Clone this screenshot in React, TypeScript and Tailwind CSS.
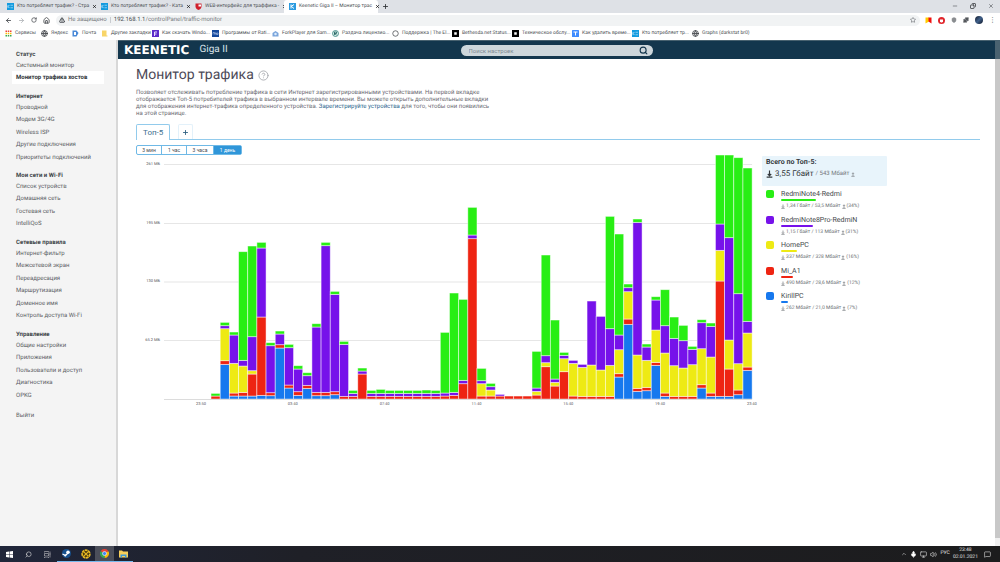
import React from "react";
import {
  ArrowLeft,
  ArrowRight,
  ChevronUp,
  CircleHelp,
  Copy,
  Globe,
  House,
  MessageSquare,
  Mic,
  Minus,
  Monitor,
  Plus,
  Puzzle,
  RotateCw,
  Search,
  Shield,
  Star,
  TriangleAlert,
  Volume2,
  X,
} from "lucide-react";

const tabs = [
  { title: "Кто потребляет трафик? - Стра", icon: "keenetic", active: false },
  { title: "Кто потребляет трафик? - Ката", icon: "keenetic", active: false },
  { title: "WEB-интерфейс для траффика -", icon: "shield", active: false },
  { title: "Keenetic Giga II – Монитор трас", icon: "router", active: true },
];

const bookmarks = [
  { title: "Сервисы", icon: "apps", width: "w-[30px]" },
  { title: "Яндекс", icon: "globe", width: "w-[25px]" },
  { title: "Почта", icon: "mail", width: "w-[23px]" },
  { title: "Другие закладки", icon: "folder", width: "w-[45px]" },
  { title: "Как скачать Windo...", icon: "purple", width: "w-[54px]" },
  { title: "Программы от Rati...", icon: "navy", width: "w-[54px]" },
  { title: "ForkPlayer для Sam...", icon: "fork", width: "w-[54px]" },
  { title: "Раздача лицензио...", icon: "teal", width: "w-[54px]" },
  { title: "Поддержка | The El...", icon: "ring", width: "w-[54px]" },
  { title: "Bethesda.net Status...", icon: "black", width: "w-[54px]" },
  { title: "Техническое обслу...", icon: "black", width: "w-[54px]" },
  { title: "Как удалить време...", icon: "letter", width: "w-[54px]" },
  { title: "Кто потребляет тр...", icon: "keenetic", width: "w-[54px]" },
  { title: "Graphs (darkstat br0)", icon: "globe", width: "w-[60px]" },
];

const menu = [
  { title: "Статус", items: ["Системный монитор", "Монитор трафика хостов"] },
  {
    title: "Интернет",
    items: ["Проводной", "Модем 3G/4G", "Wireless ISP", "Другие подключения", "Приоритеты подключений"],
  },
  { title: "Мои сети и Wi-Fi", items: ["Список устройств", "Домашняя сеть", "Гостевая сеть", "IntelliQoS"] },
  {
    title: "Сетевые правила",
    items: [
      "Интернет-фильтр",
      "Межсетевой экран",
      "Переадресация",
      "Маршрутизация",
      "Доменное имя",
      "Контроль доступа Wi-Fi",
    ],
  },
  { title: "Управление", items: ["Общие настройки", "Приложения", "Пользователи и доступ", "Диагностика", "OPKG"] },
];

const hosts = [
  { name: "RedmiNote4-Redmi", down: "1,34 Гбайт", up: "53,5 Мбайт", share: "(34%)", color: "bg-[#28ee14]", bar: "w-[35px]" },
  { name: "RedmiNote8Pro-RedmiN", down: "1,15 Гбайт", up: "113 Мбайт", share: "(31%)", color: "bg-[#7612ea]", bar: "w-8" },
  { name: "HomePC", down: "337 Мбайт", up: "328 Мбайт", share: "(16%)", color: "bg-[#eeea14]", bar: "w-4" },
  { name: "Mi_A1", down: "490 Мбайт", up: "28,6 Мбайт", share: "(12%)", color: "bg-[#ee2412]", bar: "w-3" },
  { name: "KirillPC", down: "262 Мбайт", up: "21,0 Мбайт", share: "(7%)", color: "bg-[#1678ee]", bar: "w-[7px]" },
];

// stacking order from the axis up
const stackColors = ["#1678ee", "#ee2412", "#eeea14", "#7612ea", "#28ee14"];

const bars = [
  [0, 9, 0, 0, 8],
  [104, 11, 96, 9, 10],
  [9, 9, 89, 85, 9],
  [9, 11, 79, 17, 326],
  [9, 66, 10, 102, 272],
  [11, 235, 0, 207, 17],
  [10, 9, 0, 141, 9],
  [153, 10, 0, 32, 9],
  [33, 9, 0, 112, 10],
  [11, 11, 0, 68, 10],
  [32, 9, 0, 29, 9],
  [10, 10, 0, 196, 10],
  [10, 10, 0, 440, 10],
  [13, 9, 0, 292, 9],
  [0, 8, 0, 156, 9],
  [0, 8, 0, 9, 9],
  [0, 75, 0, 9, 9],
  [0, 8, 0, 9, 9],
  [0, 8, 0, 9, 12],
  [0, 8, 0, 9, 9],
  [0, 8, 0, 9, 9],
  [0, 8, 0, 9, 9],
  [0, 8, 0, 9, 9],
  [0, 8, 0, 9, 10],
  [0, 8, 0, 9, 9],
  [0, 9, 0, 9, 182],
  [0, 11, 0, 9, 298],
  [0, 46, 0, 10, 243],
  [0, 481, 0, 11, 83],
  [0, 9, 37, 9, 37],
  [0, 9, 18, 10, 10],
  [0, 9, 0, 5, 0],
  [0, 9, 0, 0, 0],
  [0, 9, 0, 0, 0],
  [0, 9, 0, 0, 0],
  [0, 12, 11, 10, 110],
  [0, 97, 12, 21, 302],
  [0, 39, 11, 10, 177],
  [0, 82, 39, 10, 9],
  [0, 9, 98, 9, 0],
  [0, 8, 87, 9, 0],
  [0, 8, 94, 192, 0],
  [0, 8, 79, 161, 0],
  [0, 8, 93, 110, 337],
  [66, 10, 72, 44, 303],
  [224, 16, 82, 12, 11],
  [23, 9, 100, 398, 10],
  [25, 10, 81, 40, 9],
  [101, 9, 97, 90, 10],
  [8, 10, 120, 82, 108],
  [0, 8, 92, 82, 64],
  [0, 8, 85, 82, 46],
  [0, 8, 95, 46, 9],
  [33, 10, 108, 78, 9],
  [8, 10, 108, 92, 10],
  [8, 346, 92, 79, 207],
  [8, 82, 87, 307, 248],
  [13, 14, 79, 210, 408],
  [86, 10, 102, 35, 460],
];

const yTicks = [
  { label: "261 МБ", y: 9.5 },
  { label: "195 МБ", y: 68.5 },
  { label: "130 МБ", y: 127 },
  { label: "65.2 МБ", y: 185.5 },
];

const xTicks = ["23:50", "03:40", "07:40", "11:40", "15:40", "19:40", "23:40"];

function SmallIcon({ name }: { name: string }) {
  if (name === "globe") return <Globe className="w-[7px] h-[7px] shrink-0 text-[#44474b]" strokeWidth={3} />;
  return (
    <svg viewBox="0 0 14 14" className="w-[7px] h-[7px] shrink-0">
      {name === "apps" &&
        [0, 1, 2].map((r) =>
          [0, 1, 2].map((c) => (
            <rect
              key={`${r}${c}`}
              x={1 + c * 4.5}
              y={1 + r * 4.5}
              width="3"
              height="3"
              fill={["#ea4335", "#fbbc04", "#34a853"][r]}
            />
          ))
        )}
      {name === "keenetic" && (
        <>
          <rect width="14" height="14" fill="#149bdf" />
          <path d="M2 4v6M2 7l3-3M2 7l3 3M7 4.500h5M7 9.500h5" stroke="#bfe6fa" strokeWidth="1.300" fill="none" />
        </>
      )}
      {name === "shield" && (
        <>
          <path d="M1 1h12v6c0 4-3 6-6 7-3-1-6-3-6-7z" fill="#d0202c" />
          <path d="M7 3h5v4H7z" fill="#fff" />
        </>
      )}
      {name === "router" && (
        <>
          <rect width="14" height="14" fill="#2b9be0" />
          <path d="M4 3v8M4 7l6-4M5 7l5 4" stroke="#fff" strokeWidth="2" fill="none" />
        </>
      )}
      {name === "mail" && (
        <>
          <path d="M1 1h8l4 5-4 7H1z" fill="#4a8ad8" />
          <path d="M4 4h4v6H4z" fill="#fff" />
        </>
      )}
      {name === "folder" && <path d="M2 1h9v10h2v2H2z" fill="#f8d568" />}
      {name === "purple" && (
        <>
          <rect width="14" height="14" fill="#5b2bc9" />
          <path d="M5 12V4h5M5 8h4" stroke="#e8dcff" strokeWidth="2" fill="none" />
        </>
      )}
      {name === "navy" && (
        <>
          <rect width="14" height="14" fill="#14489c" />
          <path d="M2 9V5h3v4M7 9V5M9 9h3V6H9z" stroke="#d8e6ff" fill="none" />
        </>
      )}
      {name === "fork" && (
        <>
          <path d="M1 6l6-4 6 4v7H1z" fill="#7aa5dc" />
          <circle cx="7" cy="8" r="2.500" fill="#dcebfb" />
        </>
      )}
      {name === "teal" && (
        <>
          <circle cx="7" cy="7" r="6" fill="#d5ece8" stroke="#2e7d78" strokeWidth="1.500" />
          <path d="M5 10V4h4v3H5l4 3" stroke="#185a58" strokeWidth="1.500" fill="none" />
        </>
      )}
      {name === "ring" && <circle cx="7" cy="7" r="5.500" fill="none" stroke="#44474b" strokeWidth="1.500" />}
      {name === "black" && (
        <>
          <rect width="14" height="14" fill="#000" />
          <path d="M4.500 4.500h5v5h-5z" fill="#fff" />
        </>
      )}
      {name === "letter" && (
        <>
          <rect width="14" height="14" rx="1" fill="#3f8cff" />
          <path d="M3 4h8M7 4v7" stroke="#fff" strokeWidth="2" />
        </>
      )}
    </svg>
  );
}

function TransferIcon({ up = false, className }: { up?: boolean; className: string }) {
  return (
    <svg viewBox="0 0 12 14" className={`shrink-0 fill-none stroke-current ${className}`} strokeWidth="2">
      <path d={up ? "M6 12V2M3 5l3-3 3 3M1 12.500h10" : "M6 1v9M3 7l3 3 3-3M1 12.500h10"} />
    </svg>
  );
}

function BrowserChrome() {
  return (
    <header className="text-[#4b4f54]">
      {/* Tab strip */}
      <div className="h-[13px] flex items-stretch bg-[#dee1e6]">
        <div className="flex items-stretch pl-[2px]">
          {tabs.map((tab, i) => (
            <div
              key={i}
              className={`w-[94px] pl-[5px] pr-1 flex items-center gap-[3px] text-[5px] ${
                tab.active ? "bg-white rounded-t-[3px]" : ""
              }`}
            >
              <SmallIcon name={tab.icon} />
              <span className="flex-1 whitespace-nowrap">{tab.title}</span>
              <button aria-label="Закрыть вкладку">
                <X className="w-[5px] h-[5px] text-black" strokeWidth={3} />
              </button>
            </div>
          ))}
        </div>
        <button aria-label="Новая вкладка" className="px-1">
          <Plus className="w-[7px] h-[7px] text-[#33363a]" strokeWidth={3} />
        </button>
        <div className="ml-auto pr-[6px] pb-[2px] flex items-center gap-3 text-[#33363a]">
          <button aria-label="Свернуть">
            <Minus className="w-[6px] h-[6px]" />
          </button>
          <button aria-label="Восстановить">
            <Copy className="w-[6px] h-[6px] -scale-x-100" strokeWidth={3} />
          </button>
          <button aria-label="Закрыть">
            <X className="w-[6px] h-[6px]" />
          </button>
        </div>
      </div>

      {/* Address bar */}
      <div className="h-[14px] px-[5px] flex items-center bg-white">
        <div className="flex items-center gap-[6px] pr-[6px]">
          <button aria-label="Назад">
            <ArrowLeft className="w-[7px] h-[7px]" strokeWidth={3} />
          </button>
          <button aria-label="Вперёд">
            <ArrowRight className="w-[7px] h-[7px] text-[#b4b7ba]" strokeWidth={3} />
          </button>
          <button aria-label="Обновить">
            <RotateCw className="w-[6px] h-[6px]" strokeWidth={3} />
          </button>
          <button aria-label="Домой">
            <House className="w-[7px] h-[7px]" strokeWidth={3} />
          </button>
        </div>
        <div className="flex-1 h-[11px] rounded-full bg-[#f1f3f4] pl-[3px] pr-1 flex items-center text-[6px] leading-none">
          <TriangleAlert className="w-[6px] h-[6px]" strokeWidth={4} />
          <span className="ml-[3px] pr-[3px] border-r border-[#c9ccd0] text-[#777b80]">Не защищено</span>
          <span className="ml-[3px]">
            192.168.1.1<span className="text-[#777b80]">/controlPanel/traffic-monitor</span>
          </span>
          <button aria-label="Добавить в закладки" className="ml-auto">
            <Star className="w-[6px] h-[6px]" />
          </button>
        </div>
        <div className="flex items-center gap-[6px] pl-[5px]">
          <svg viewBox="0 0 14 14" className="w-[7px] h-[7px]">
            <path d="M1 1h7v8l-7 4z" fill="#ffcc00" />
            <path d="M7 1h6v12L7 9z" fill="#f00f0f" />
          </svg>
          <svg viewBox="0 0 14 14" className="w-[7px] h-[7px]">
            <circle cx="7" cy="7" r="7" fill="#e0252b" />
            <path d="M4 5h6v4l-2 2H6L4 9z" fill="#fff" />
          </svg>
          <Shield className="w-[6px] h-[6px] fill-[#8a8d90] text-[#8a8d90]" />
          <Puzzle className="w-[6px] h-[6px] fill-[#55585c]" />
          <span className="w-2 h-2 rounded-full bg-[linear-gradient(135deg,#101828,#40608a,#0d1424)]" />
          <span className="w-[6px] text-[7px] leading-none text-center">⋮</span>
        </div>
      </div>

      {/* Bookmarks */}
      <nav className="h-[13px] px-[5px] flex items-center gap-[6px] bg-white text-[5px]">
        {bookmarks.map((b) => (
          <a key={b.title} href="#" className={`flex items-center gap-[3px] whitespace-nowrap shrink-0 ${b.width}`}>
            <SmallIcon name={b.icon} />
            <span>{b.title}</span>
          </a>
        ))}
      </nav>
    </header>
  );
}

function Sidebar() {
  return (
    <aside className="w-[118px] shrink-0 pt-[10px] pl-3 pr-3 bg-[#f4f4f4] border-r-2 border-[#d8d8d8] text-[6px] text-[#5b6064]">
      <nav className="space-y-2">
        {menu.map((group) => (
          <section key={group.title}>
            <h2 className="px-1 h-[9px] leading-[9px] font-bold text-[#41464a]">{group.title}</h2>
            <ul>
              {group.items.map((item) => (
                <li
                  key={item}
                  className={`flex items-center h-3 even:h-[13px] px-1 ${
                    item === "Монитор трафика хостов" ? "bg-white font-bold text-[#2f3438]" : ""
                  }`}
                >
                  <a href="#">{item}</a>
                </li>
              ))}
            </ul>
          </section>
        ))}
        <a href="#" className="flex items-center h-3 px-1">
          Выйти
        </a>
      </nav>
    </aside>
  );
}

function TrafficChart() {
  const step = 9.17;
  const base = 244;

  return (
    <svg viewBox="0 0 616 252" className="w-full h-auto overflow-visible" role="img" aria-label="Трафик по хостам">
      {yTicks.map((t) => (
        <g key={t.label}>
          <line x1="28" x2="616" y1={t.y} y2={t.y} stroke="#e6e6e6" />
          <text x="24" y={t.y} textAnchor="end" className="text-[4px] fill-[#55555a]">
            {t.label}
          </text>
        </g>
      ))}
      {bars.map((stack, i) => {
        let top = base;
        return stack.map((value, k) => {
          const h = value / 3;
          top -= h;
          if (!value) return null;
          return (
            <rect
              key={`${i}-${k}`}
              x={75 + i * step}
              y={top}
              width={step}
              height={h}
              fill={stackColors[k]}
              stroke="#fff"
              strokeOpacity="0.6"
              strokeWidth="0.8"
            />
          );
        });
      })}
      <line x1="28" x2="616" y1={base + 0.5} y2={base + 0.5} stroke="#dcdcdc" />
      {xTicks.map((label, i) => (
        <text key={label} x={65 + i * 91.8} y="250" textAnchor="middle" className="text-[4px] fill-[#55555a]">
          {label}
        </text>
      ))}
    </svg>
  );
}

function Legend() {
  return (
    <div className="w-[125px] shrink-0 mt-px">
      <div className="h-[30px] px-1 pt-[2px] rounded-[1px] bg-[#e8f4fb] text-[#33383c]">
        <h2 className="text-[7px] leading-[9px] font-bold">Всего по Топ-5:</h2>
        <p className="mt-[2px] flex items-center gap-[2px] text-[8px] leading-[10px]">
          <TransferIcon className="w-[7px] h-[8px]" />
          3,55 Гбайт
          <span className="text-[6px] text-[#75797d]">/ 543 Мбайт</span>
          <TransferIcon up className="w-[4px] h-[5px] text-[#75797d]" />
        </p>
      </div>
      <ul className="mt-1">
        {hosts.map((host) => (
          <li key={host.name} className="h-[26px] even:h-[25px] pl-1 flex items-start gap-[7px]">
            <span className={`w-2 h-2 rounded-[2px] ${host.color}`} />
            <div className="text-[#44484c]">
              <p className="text-[7px] leading-[8px]">{host.name}</p>
              <div className={`mt-px h-[2px] rounded-full ${host.color} ${host.bar}`} />
              <p className="mt-[3px] flex items-center gap-px text-[5px] leading-[5px] text-[#6d7175] whitespace-nowrap">
                <TransferIcon className="w-[4px] h-[5px]" />
                {host.down} / {host.up}
                <TransferIcon up className="w-[4px] h-[5px]" />
                {host.share}
              </p>
            </div>
          </li>
        ))}
      </ul>
    </div>
  );
}

function RouterHeader() {
  return (
    <div className="h-[19px] px-[6px] flex items-center bg-[#13364d] border-t border-[#48616f] text-white">
      <div className="flex-1 flex items-center gap-[10px]">
        <span className="font-['DejaVu_Sans',sans-serif] text-[12px] leading-none font-bold">KEENETIC</span>
        <span className="text-[10px] leading-none text-[#dbe4ea]">Giga II</span>
      </div>
      <label className="w-[192px] h-[11px] px-2 rounded-full bg-[#cdd6db] flex items-center">
        <input
          type="text"
          aria-label="Поиск настроек"
          placeholder="Поиск настроек"
          className="flex-1 min-w-0 text-[6px] leading-none outline-none bg-transparent placeholder:text-[#7f8b94]"
        />
        <Search className="w-[9px] h-[9px] text-[#13364d] -mr-[3px]" strokeWidth={3} />
      </label>
      <div className="flex-1" />
    </div>
  );
}

function Taskbar() {
  return (
    <footer className="h-4 flex items-stretch text-[#e4e4e4] bg-[linear-gradient(90deg,#20263a,#1f2027_30%,#1c1c1d)]">
      <button aria-label="Пуск" className="w-[19px] flex items-center justify-center">
        <svg viewBox="0 0 14 14" className="w-[7px] h-[7px] fill-white">
          <path d="M0 2l6-1v5.500H0zM7 1l7-1v6.500H7zM0 7.500h6V13l-6-1zM7 7.500h7V14l-7-1z" />
        </svg>
      </button>
      <button aria-label="Поиск" className="w-[19px] flex items-center justify-center">
        <Search className="w-[7px] h-[7px] -scale-x-100" />
      </button>
      <button aria-label="Представление задач" className="w-[19px] flex items-center justify-center">
        <svg viewBox="0 0 14 14" className="w-[7px] h-[7px] fill-none stroke-current">
          <path d="M1 5h8v5H1zM1 3V1h8v2M1 12v2h8v-2M12 1v12M11 6h2" />
        </svg>
      </button>
      <button aria-label="Steam" className="w-[19px] flex items-center justify-center border-b border-[#76b9ed]">
        <svg viewBox="0 0 18 18" className="w-[9px] h-[9px]">
          <circle cx="9" cy="9" r="9" fill="#17508c" />
          <path d="M1 10l6 3 5-5" stroke="#fff" strokeWidth="2.500" fill="none" />
          <circle cx="12" cy="6.500" r="3.500" fill="#fff" />
          <circle cx="6.500" cy="13" r="2" fill="#fff" />
        </svg>
      </button>
      <button aria-label="Игра" className="w-[19px] flex items-center justify-center border-b border-[#76b9ed]">
        <svg viewBox="0 0 18 18" className="w-[10px] h-[10px]">
          <circle cx="9" cy="9" r="7" fill="#4a3a0d" stroke="#e8b923" strokeWidth="3" strokeDasharray="5 1" />
          <path d="M5 5l8 8M13 5l-8 8" stroke="#e8b923" strokeWidth="2" />
        </svg>
      </button>
      <button
        aria-label="Chrome"
        className="w-[19px] flex items-center justify-center bg-[#4b4e5a] border-b border-[#76b9ed]"
      >
        <svg viewBox="0 0 18 18" className="w-[9px] h-[9px]">
          <path d="M9 9L1.200 4.500A9 9 0 0 1 16.800 4.500z" fill="#ea4335" />
          <path d="M9 9l7.800-4.500A9 9 0 0 1 9 18z" fill="#fbbc05" />
          <path d="M9 9v9A9 9 0 0 1 1.200 4.500z" fill="#34a853" />
          <circle cx="9" cy="9" r="4" fill="#4285f4" stroke="#fff" strokeWidth="1.200" />
        </svg>
      </button>
      <button aria-label="Проводник" className="w-[19px] flex items-center justify-center border-b border-[#76b9ed]">
        <svg viewBox="0 0 18 16" className="w-[9px] h-2">
          <path d="M0 1h6l2 2h10v12H0z" fill="#f7cf5a" />
          <path d="M3 9h12v6h-3v-3H6v3H3z" fill="#3d9ad8" />
        </svg>
      </button>

      <div className="ml-auto pr-[9px] flex items-center gap-[3px]">
        <ChevronUp className="w-[6px] h-[6px]" />
        <Mic className="w-[7px] h-[7px] fill-white text-white" />
        <Monitor className="w-[7px] h-[7px]" />
        <Volume2 className="w-[7px] h-[7px]" />
        <span className="text-[5px]">РУС</span>
        <div className="text-[5px] leading-[7px] text-center">
          <p>23:48</p>
          <p>02.01.2021</p>
        </div>
        <MessageSquare className="ml-[3px] w-[7px] h-[7px]" />
      </div>
    </footer>
  );
}

export default function App() {
  return (
    <div className="min-h-screen flex flex-col bg-white font-[Roboto,'Noto_Sans',sans-serif] [text-rendering:geometricPrecision]">
      <BrowserChrome />

      <div className="flex-1 flex items-stretch">
        <Sidebar />

        <div className="flex-1 min-w-0">
          <RouterHeader />

          <main className="pl-[18px] pr-[15px] pt-[7px]">
            <h1 className="flex items-center gap-1 text-[14px] leading-[18px] text-[#4d4a58]">
              Монитор трафика
              <CircleHelp className="w-[11px] h-[11px] text-[#a9acb0]" strokeWidth={2} />
            </h1>

            <p className="mt-[5px] text-[6px] leading-[7px] text-[#6a6a72]">
              Позволяет отслеживать потребление трафика в сети Интернет зарегистрированными устройствами. На первой вкладке
              <br />
              отображается Топ-5 потребителей трафика в выбранном интервале времени. Вы можете открыть дополнительные вкладки
              <br />
              для отображения интернет-трафика определенного устройства.{" "}
              <a href="#" className="text-[#28648c]">
                Зарегистрируйте устройства
              </a>{" "}
              для того, чтобы они появились
              <br />
              на этой странице.
            </p>

            <div className="mt-[7px] h-4 flex items-stretch">
              <button className="px-[6px] border border-b-0 border-[#92cbec] rounded-t-[2px] text-[8px] leading-none text-[#41708f]">
                Топ-5
              </button>
              <div className="flex-1 pl-2 border-b border-[#92cbec] flex">
                <button
                  aria-label="Добавить вкладку"
                  className="w-[15px] flex items-center justify-center border border-b-0 border-[#e3f1fa] rounded-t-[2px]"
                >
                  <Plus className="w-[7px] h-[7px] text-[#2d5f80]" strokeWidth={3} />
                </button>
              </div>
            </div>

            <div className="mt-[5px] w-fit h-[10px] flex divide-x divide-[#6fb9e6] border border-[#6fb9e6] rounded-[2px] text-[5px] leading-none text-[#44484c]">
              <button className="w-[25px]">3 мин</button>
              <button className="w-[25px]">1 час</button>
              <button className="w-[27px]">3 часа</button>
              <button className="w-[27px] bg-[#2f96d9] text-white">1 день</button>
            </div>

            <div className="flex items-start gap-[10px]">
              <div className="w-[73%]">
                <TrafficChart />
              </div>
              <Legend />
            </div>
          </main>
        </div>

        {/* Scrollbar */}
        <div className="w-[5px] shrink-0 flex flex-col bg-[#f1f1f1]">
          <div className="h-[19px] bg-[#4a6270]" />
          <div className="flex-1 bg-[#c8c8c8] mb-2" />
        </div>
      </div>

      <Taskbar />
    </div>
  );
}
